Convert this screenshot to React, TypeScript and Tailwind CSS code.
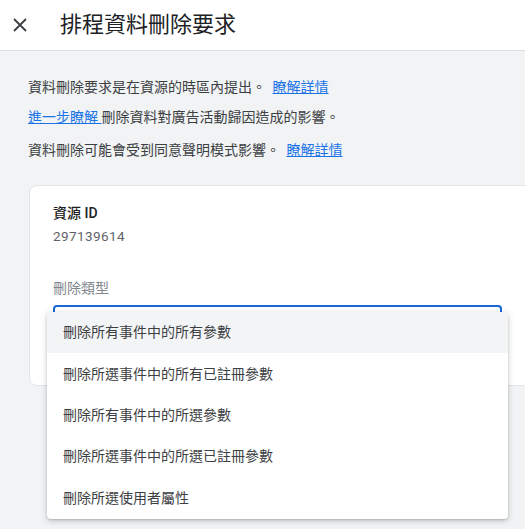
const FONT = "font-['Roboto','Noto_Sans_CJK_TC',sans-serif]";

const OPTIONS = [
  "刪除所有事件中的所有參數",
  "刪除所選事件中的所有已註冊參數",
  "刪除所有事件中的所選參數",
  "刪除所選事件中的所選已註冊參數",
  "刪除所選使用者屬性",
];

function CloseIcon() {
  return (
    <svg width="16" height="16" viewBox="0 0 16 16" fill="none">
      <path d="M2 2 L14 14 M14 2 L2 14" stroke="#3c4043" strokeWidth="1.8" />
    </svg>
  );
}

export default function App() {
  return (
    <div className={`${FONT} flex h-screen flex-col overflow-hidden bg-[#f1f3f4] text-[#202124]`}>
      {/* 標題列 */}
      <div className="flex h-[51px] shrink-0 items-center border-b border-[#dadce0] bg-white">
        <button className="ml-[12px] flex h-[16px] w-[16px] items-center justify-center">
          <CloseIcon />
        </button>
        <h1 className="ml-[32px] text-[22px] leading-none text-[#202124]">排程資料刪除要求</h1>
      </div>

      {/* 說明文字 */}
      <div className="px-[28px] pt-[27px] text-[14px] leading-[19px] text-[#3c4043]">
        <p>
          資料刪除要求是在資源的時區內提出。{" "}
          <a className="ml-[3px] text-[#1a73e8] underline">瞭解詳情</a>
        </p>
        <p className="mt-[11px]">
          <a className="text-[#1a73e8] underline">進一步瞭解 </a>
          刪除資料對廣告活動歸因造成的影響。
        </p>
        <p className="mt-[14px]">
          資料刪除可能會受到同意聲明模式影響。{" "}
          <a className="ml-[3px] text-[#1a73e8] underline">瞭解詳情</a>
        </p>
      </div>

      {/* 卡片 */}
      <div className="relative ml-[29px] mt-[25px] h-[201px] w-[560px] rounded-[8px] border border-[#e3e5e8] bg-white pl-[23px] pt-[17px]">
        <div className="text-[14px] font-medium leading-[20px] text-[#202124]">資源 ID</div>
        <div className="mt-[3px] text-[13.5px] leading-[20px] tracking-[0.4px] text-[#5f6368]">297139614</div>
        <div className="mt-[32px] text-[14px] leading-[20px] text-[#80868b]">刪除類型</div>
        <div className="mt-[7px] h-[40px] w-[449px] rounded-[4px] border-2 border-[#1967d2]" />

        {/* 下拉選單 */}
        <div className="absolute left-[17px] top-[126px] w-[461px] overflow-hidden rounded-[4px] bg-white shadow-[0_2px_6px_rgba(60,64,67,0.25),0_1px_2px_rgba(60,64,67,0.2)]">
          {OPTIONS.map((opt, i) => (
            <div
              key={opt}
              className={`flex h-[41.4px] items-center pl-[16px] text-[14px] text-[#3c4043] ${
                i === 0 ? "bg-[#f3f4f6]" : ""
              }`}
            >
              {opt}
            </div>
          ))}
        </div>
      </div>
    </div>
  );
}
